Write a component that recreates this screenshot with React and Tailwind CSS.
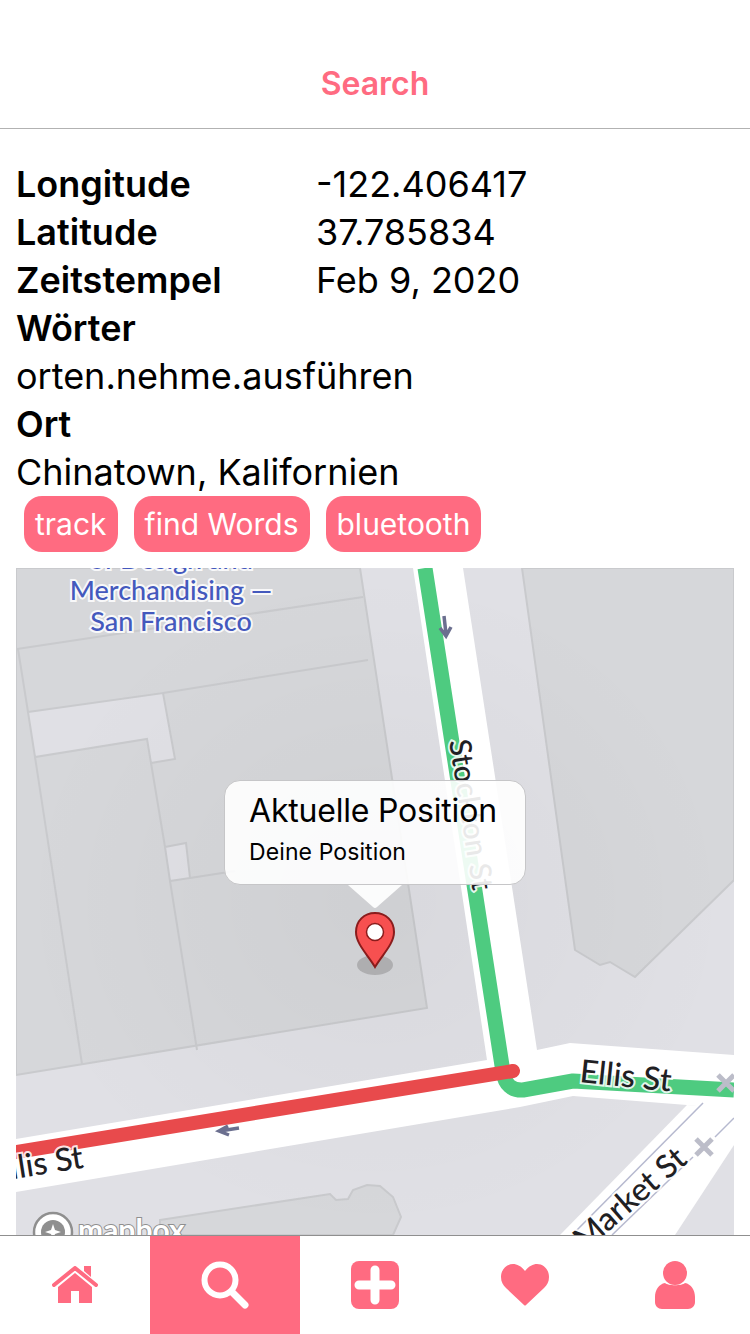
const font = { fontFamily: 'Inter, "Noto Sans", sans-serif' }

const rows = [
  ['Longitude', '-122.406417'],
  ['Latitude', '37.785834'],
  ['Zeitstempel', 'Feb 9, 2020'],
]

const MapLabel = ({ x, y, angle = 0, size = 30, fill = '#1f2023', children }) => (
  <text
    x={x}
    y={y}
    transform={`rotate(${angle} ${x} ${y})`}
    fontFamily="Lato, Roboto, sans-serif"
    fontSize={size}
    fontWeight="500"
    fill={fill}
    stroke="#ffffff"
    strokeWidth="4"
    strokeOpacity="0.85"
    paintOrder="stroke"
  >
    {children}
  </text>
)

const MapDrawing = () => (
  <svg viewBox="16 568 718 667" className="block w-full h-full">
    <defs>
      <radialGradient id="dim" cx="50%" cy="50%" r="50%">
        <stop offset="0%" stopColor="#000" stopOpacity="0.035" />
        <stop offset="100%" stopColor="#000" stopOpacity="0" />
      </radialGradient>
    </defs>
    <rect x="16" y="568" width="718" height="667" fill="#e0e0e5" />

    {/* buildings */}
    <g fill="#d6d7da" stroke="#c9cacd" strokeWidth="2">
      <path d="M16 568 H360 L427 1008 L16 1075 Z" />
      <path d="M522 568 H734 V880 L635 977 L610 962 L600 965 L575 950 Z" />
      <path d="M160 1220 L330 1194 L336 1200 L348 1199 L353 1190 L367 1185 L380 1186 L393 1197 L401 1217 L393 1235 H160 Z" />
    </g>
    <g fill="#e0e0e5" stroke="#c9cacd" strokeWidth="2">
      <path d="M28 712 L163 693 L175 759 L151 763 L147 739 L35 757 Z" />
      <path d="M165 847 L186 843 L190 878 L170 881 Z" />
    </g>
    <g fill="none" stroke="#c9cacd" strokeWidth="2">
      <path d="M17 649 L363 597" />
      <path d="M18 649 L28 712" />
      <path d="M163 693 L368 660" />
      <path d="M35 757 L82 1064" />
      <path d="M151 763 L165 847" />
      <path d="M170 881 L197 1050" />
      <path d="M190 878 L235 871" />
    </g>
    <rect x="16" y="568" width="718" height="667" fill="url(#dim)" />

    {/* streets */}
    <g fill="#ffffff">
      <path d="M413 568 H463 L537 1050 L570 1043 L734 1055 V1110 L687 1105 L573 1096 L520 1107 L16 1192 V1139 L487 1060 Z" />
      <path d="M687 1105 L734 1108 V1145 L675 1235 H560 Z" />
    </g>
    <g stroke="#b6b9cf" strokeWidth="1.5" fill="none">
      <path d="M703 1103 L572 1235" />
      <path d="M734 1118 L715 1137" />
      <path d="M693 1157 L612 1235" />
    </g>
    <path d="M425 568 L503 1072 Q506 1091 523 1090 L573 1081 L734 1090" fill="none" stroke="#4ecb80" strokeWidth="15" strokeLinejoin="round" />
    <path d="M16 1152 L513 1071" fill="none" stroke="#e84a4c" strokeWidth="14" strokeLinecap="round" />

    {/* one-way arrows */}
    <g fill="none" stroke="#6b6f8f" strokeWidth="3.5">
      <path d="M444 616 L446 634 M440 628 L446 636 L451 627" />
      <path d="M239 1128 L220 1131 M228 1126 L219 1131 L229 1135" />
    </g>

    <MapLabel x={171} y={600} size={27} fill="#4459bd" ><tspan textAnchor="middle">Merchandising —</tspan></MapLabel>
    <MapLabel x={171} y={631} size={27} fill="#4459bd"><tspan textAnchor="middle">San Francisco</tspan></MapLabel>
    <MapLabel x={171} y={569} size={27} fill="#4459bd"><tspan textAnchor="middle">of Design and</tspan></MapLabel>
    <MapLabel x={449} y={741} angle={81} size={30}>Stockton St</MapLabel>
    <MapLabel x={579} y={1082} angle={6} size={32}>Ellis St</MapLabel>
    <MapLabel x={-6} y={1182} angle={-9} size={32}>Ellis St</MapLabel>
    <MapLabel x={585} y={1252} angle={-41} size={32}>Market St</MapLabel>

    <g stroke="#bcbdc9" strokeWidth="5">
      <path d="M718 1075 L734 1091 M734 1075 L718 1091" />
      <path d="M696 1139 L712 1155 M712 1139 L696 1155" />
    </g>

    {/* mapbox logo */}
    <circle cx="53" cy="1232" r="19" fill="#ffffff" stroke="#8f8f8f" strokeWidth="2.5" />
    <circle cx="53" cy="1232" r="12" fill="#8f8f8f" />
    <path d="M53 1224 L55 1230 L61 1232 L55 1234 L53 1240 L51 1234 L45 1232 L51 1230 Z" fill="#ffffff" />
    <text x="78" y="1241" fontFamily="Lato, Roboto, sans-serif" fontSize="30" fontWeight="700" fill="#ffffff" stroke="#8f8f8f" strokeWidth="2" paintOrder="stroke">mapbox</text>
  </svg>
)

const Popup = () => (
  <div className="absolute left-[208px] top-[212px] w-[302px] h-[105px] rounded-2xl border border-[#c6c6c8] bg-white/90 pl-6 pt-[11px] text-black">
    <div className="text-[32px] leading-[38px] tracking-[-0.2px]">Aktuelle Position</div>
    <div className="mt-[8px] text-[23px] leading-[28px] tracking-[0.1px]">Deine Position</div>
    <svg viewBox="0 0 54 24" className="absolute left-[123px] top-[104px] w-[54px] h-[24px]">
      <path d="M0 0 H54 L29 22 Q27 24 25 22 Z" fill="#ffffff" fillOpacity="0.92" />
    </svg>
  </div>
)

const Pin = () => (
  <svg viewBox="0 0 42 66" className="absolute left-[338px] top-[343px] w-[42px] h-[66px]">
    <ellipse cx="21" cy="54" rx="18" ry="10" fill="#aeaeb0" />
    <path d="M21 2 C10 2 2 10 2 21 C2 33 14 44 21 56 C28 44 40 33 40 21 C40 10 32 2 21 2 Z" fill="#f75050" stroke="#8a1c1c" strokeWidth="2" />
    <circle cx="21" cy="21" r="8.5" fill="#ffffff" stroke="#8a1c1c" strokeWidth="1.5" />
  </svg>
)

const HomeIcon = () => (
  <svg viewBox="0 0 46 38" className="w-[46px] h-[38px]" fill="#ff6b81">
    <path d="M32 0 H39 V11 L32 5 Z" />
    <path d="M2 19 L23 2 L44 19" fill="none" stroke="#ff6b81" strokeWidth="4" strokeLinecap="round" strokeLinejoin="round" />
    <path d="M23 7 L40 21 V37 H27 V25 H19 V37 H6 V21 Z" />
  </svg>
)

const SearchIcon = () => (
  <svg viewBox="0 0 48 48" className="w-[48px] h-[48px]" fill="none" stroke="#ffffff">
    <circle cx="19" cy="19" r="15.5" strokeWidth="6" />
    <path d="M32 32 L44 44" strokeWidth="7" strokeLinecap="round" />
  </svg>
)

const PlusIcon = () => (
  <svg viewBox="0 0 48 48" className="w-[48px] h-[48px]">
    <rect width="48" height="48" rx="8" fill="#ff6b81" />
    <path d="M24 9 V39 M8 24 H40" stroke="#ffffff" strokeWidth="9" strokeLinecap="round" />
  </svg>
)

const HeartIcon = () => (
  <svg viewBox="0 0 48 42" className="w-[48px] h-[42px]" fill="#ff6b81">
    <path d="M24 7 C20 2 16 0 12 0 C5 0 0 6 0 13 C0 18 2 21 5 24 L23 41 Q24 42 25 41 L43 24 C46 21 48 18 48 13 C48 6 43 0 36 0 C32 0 28 2 24 7 Z" />
  </svg>
)

const UserIcon = () => (
  <svg viewBox="0 0 40 48" className="w-[40px] h-[48px]" fill="#ff6b81">
    <circle cx="20" cy="12" r="12" />
    <path d="M10 22 C13 25 27 25 30 22 C36 23 40 29 40 36 V41 C40 45 37 48 33 48 H7 C3 48 0 45 0 41 V36 C0 29 4 23 10 22 Z" />
  </svg>
)

const tabs = [
  { icon: <HomeIcon /> },
  { icon: <SearchIcon />, active: true },
  { icon: <PlusIcon /> },
  { icon: <HeartIcon /> },
  { icon: <UserIcon /> },
]

export default function App() {
  return (
    <div className="flex flex-col w-[750px] h-[1334px] bg-white overflow-hidden" style={font}>
      <div className="h-[129px] shrink-0 flex justify-center items-start pt-[65px] border-b border-[#b2b2b2]">
        <span className="text-[32px] leading-[38px] font-semibold text-[#ff6b81]">Search</span>
      </div>

      <div className="px-4 pt-[31px] text-[36px] leading-[48px] text-black">
        {rows.map(([label, value]) => (
          <div key={label} className="flex">
            <div className="w-[300px] font-semibold">{label}</div>
            <div>{value}</div>
          </div>
        ))}
        <div className="font-semibold">Wörter</div>
        <div>orten.nehme.ausführen</div>
        <div className="font-semibold">Ort</div>
        <div>Chinatown, Kalifornien</div>
      </div>

      <div className="flex gap-4 px-6 h-[56px] mb-4 shrink-0">
        {['track', 'find Words', 'bluetooth'].map((label) => (
          <div key={label} className="h-[56px] px-[11px] flex items-center rounded-[18px] bg-[#ff6b81] text-white text-[30px]">
            {label}
          </div>
        ))}
      </div>

      <div className="relative flex-1 mx-4 min-h-0">
        <MapDrawing />
        <Popup />
        <Pin />
      </div>

      <div className="flex h-[99px] shrink-0 border-t border-[#8f8f8f] bg-white">
        {tabs.map((tab, i) => (
          <div key={i} className={`w-[150px] flex items-center justify-center ${tab.active ? 'bg-[#ff6b81]' : ''}`}>
            {tab.icon}
          </div>
        ))}
      </div>
    </div>
  )
}
